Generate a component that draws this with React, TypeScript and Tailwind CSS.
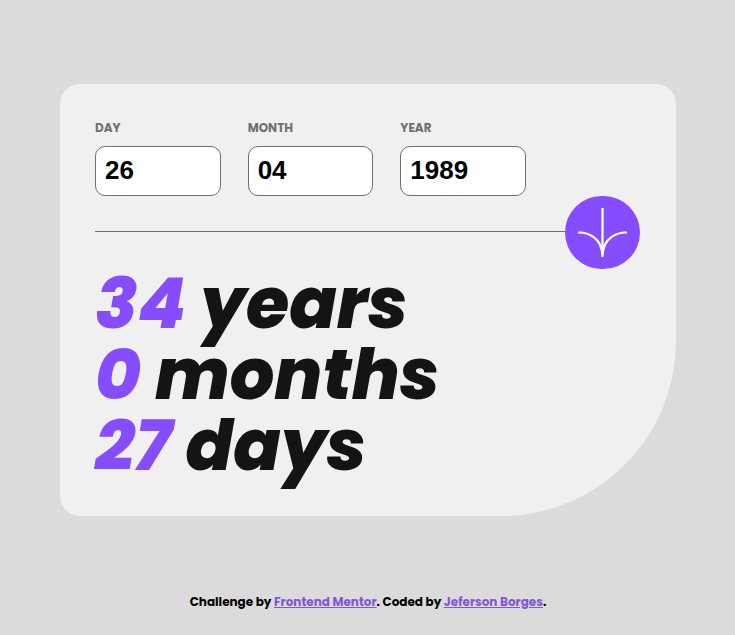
const fields = [
  { id: "day", label: "DAY", value: "26" },
  { id: "month", label: "MONTH", value: "04" },
  { id: "year", label: "YEAR", value: "1989" },
];

const results = [
  { amount: "34", unit: "years" },
  { amount: "0", unit: "months" },
  { amount: "27", unit: "days" },
];

export default function App() {
  return (
    <div className="flex min-h-screen flex-col bg-[#dbdbdb] pt-[84px] pr-[59px] pl-[60px] font-['Poppins','Inter',sans-serif]">
      <main className="w-full rounded-[20px] rounded-br-[175px] bg-[#f0f0f0] px-9 py-[35px] pl-[35px]">
        <form onSubmit={(e) => e.preventDefault()}>
          <div className="grid max-w-[431px] grid-cols-3 gap-[27px]">
            {fields.map((f) => (
              <div key={f.id} className="flex flex-col gap-[9px]">
                <label htmlFor={f.id} className="text-xs leading-[18px] font-bold text-[#716f6f]">
                  {f.label}
                </label>
                <input
                  id={f.id}
                  type="text"
                  inputMode="numeric"
                  defaultValue={f.value}
                  className="h-[50px] w-full rounded-[10px] border border-[#716f6f] bg-white px-[9px] pb-[2px] font-['Liberation_Sans',Arial,sans-serif] text-[26px] font-bold text-black"
                />
              </div>
            ))}
          </div>
          <div className="flex">
            <div className="mt-[35px] h-px flex-1 bg-[#716f6f]" />
            <button
              type="submit"
              aria-label="Calculate age"
              className="flex h-[73px] w-[75px] items-center justify-center rounded-full bg-[#854dff]"
            >
              <svg width="51" height="49" viewBox="0 0 46 44" fill="none" stroke="#fff" strokeWidth="2">
                <path d="M1 22.019C8.333 21.686 23 25.616 23 44M23 44V0M45 22.019C37.667 21.686 23 25.616 23 44" />
              </svg>
            </button>
          </div>
        </form>
        <section className="-mt-px">
          {results.map((r) => (
            <p key={r.unit} className="text-[70px] leading-[71px] font-extrabold whitespace-nowrap text-[#141414] italic">
              <span className="text-[#854dff]">{r.amount}</span> {r.unit}
            </p>
          ))}
        </section>
      </main>
      <footer className="mt-[77px] text-center text-xs leading-[18px] font-bold text-black">
        Challenge by{" "}
        <a href="#frontend-mentor" className="text-[#7f56d9] underline">
          Frontend Mentor
        </a>
        . Coded by{" "}
        <a href="#jeferson-borges" className="text-[#7f56d9] underline">
          Jeferson Borges
        </a>
        .
      </footer>
    </div>
  );
}
